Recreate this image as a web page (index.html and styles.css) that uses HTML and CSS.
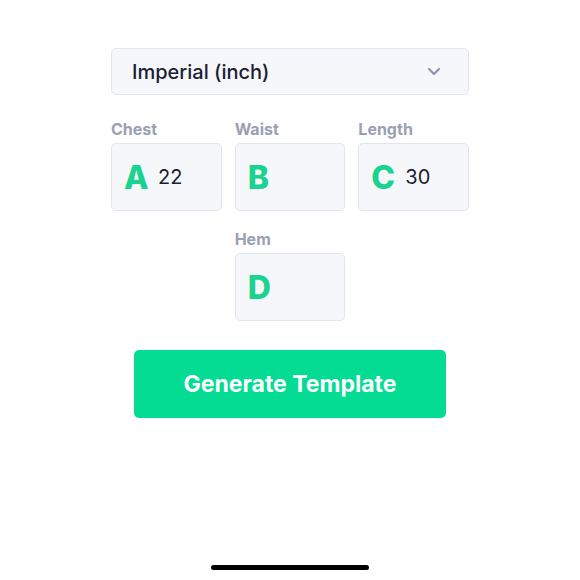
FILE: index.html
```html
<!DOCTYPE html>
<html>
<head>
<meta charset="utf-8">
<link rel="stylesheet" href="styles.css">
</head>
<body>
<div class="page">
  <div class="form">
    <div class="select">
      <span class="select-text">Imperial (inch)</span>
      <svg class="chev" width="14" height="9" viewBox="0 0 14 9"><path d="M2 2 L7 7 L12 2" fill="none" stroke="#8f95a8" stroke-width="2.2" stroke-linecap="round" stroke-linejoin="round"/></svg>
    </div>
    <div class="grid">
      <div class="field">
        <div class="label">Chest</div>
        <div class="box"><span class="letter">A</span><span class="val">22</span></div>
      </div>
      <div class="field">
        <div class="label">Waist</div>
        <div class="box"><span class="letter">B</span></div>
      </div>
      <div class="field">
        <div class="label">Length</div>
        <div class="box"><span class="letter">C</span><span class="val">30</span></div>
      </div>
      <div class="field hem">
        <div class="label">Hem</div>
        <div class="box"><span class="letter">D</span></div>
      </div>
    </div>
    <button class="btn">Generate Template</button>
  </div>
  <div class="home"></div>
</div>
</body>
</html>
```

FILE: styles.css
```css
html, body {
  margin: 0;
  padding: 0;
  background: #ffffff;
  font-family: Inter, "Noto Sans", sans-serif;
}
.page {
  width: 580px;
  height: 580px;
  position: relative;
  display: flex;
  flex-direction: column;
  align-items: center;
}
.form {
  width: 358px;
  margin-top: 48px;
  display: flex;
  flex-direction: column;
  align-items: center;
}
.select {
  width: 100%;
  height: 47px;
  box-sizing: border-box;
  border: 1px solid #e2e5ee;
  border-radius: 5px;
  background: #f6f7fb;
  display: flex;
  align-items: center;
  justify-content: space-between;
  padding: 0 27px 0 20px;
}
.select-text {
  font-size: 20px;
  font-weight: 500;
  color: #1b2033;
}
.chev { display: block; }
.grid {
  width: 100%;
  display: grid;
  grid-template-columns: 1fr 1fr 1fr;
  column-gap: 13px;
  row-gap: 18px;
  margin-top: 24px;
}
.hem { grid-column: 2; }
.label {
  font-size: 16px;
  font-weight: 700;
  color: #9aa0b3;
  line-height: 20px;
  height: 20px;
  margin-bottom: 4px;
}
.box {
  height: 68px;
  box-sizing: border-box;
  border: 1px solid #e2e5ee;
  border-radius: 5px;
  background: #f6f7fb;
  display: flex;
  align-items: center;
  padding-left: 12px;
}
.letter {
  font-size: 32px;
  font-weight: 800;
  color: #19d38e;
  width: 34px;
}
.val {
  font-size: 20px;
  color: #1b2033;
}
.btn {
  margin-top: 29px;
  width: 312px;
  height: 68px;
  border: none;
  border-radius: 5px;
  background: #04dc93;
  color: #ffffff;
  font-family: Inter, "Noto Sans", sans-serif;
  font-size: 23px;
  font-weight: 700;
  padding: 0;
}
.home {
  position: absolute;
  left: 211px;
  top: 565px;
  width: 158px;
  height: 5px;
  border-radius: 3px;
  background: #000000;
}
```
